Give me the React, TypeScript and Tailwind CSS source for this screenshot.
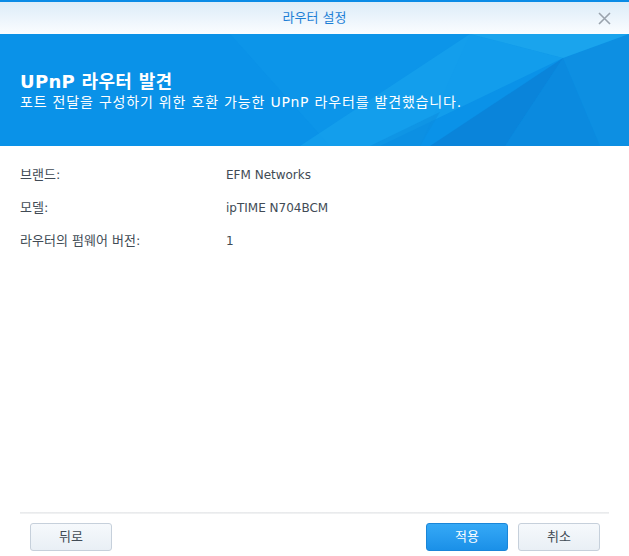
import React from "react";

const ko = { fontFamily: '"DejaVu Sans", "Noto Sans CJK KR", sans-serif' };

function Row({ label, value }: { label: string; value: string }) {
  return (
    <div className="flex h-[33px] items-center text-[#414b55]">
      <div className="w-[206px] text-[13px]">{label}</div>
      <div className="text-[12px]">{value}</div>
    </div>
  );
}

export default function App() {
  return (
    <div className="flex h-[556px] w-[629px] flex-col overflow-hidden bg-white" style={ko}>
      <div className="relative flex h-[34px] shrink-0 items-center justify-center border-t-2 border-[#0a8be6] bg-gradient-to-b from-[#dcecf8] to-[#fbfdff]">
        <span className="text-[13px] text-[#1d7fd6]">라우터 설정</span>
        <svg className="absolute right-[18px] top-[10px]" width="13" height="13" viewBox="0 0 13 13">
          <path d="M1 1L12 12M12 1L1 12" stroke="#9aa3ad" strokeWidth="1.6" />
        </svg>
      </div>
      <div className="relative flex h-[112px] shrink-0 flex-col justify-center bg-[#0a92e8] px-[20px] pt-[2px]">
        <svg className="absolute inset-0" width="629" height="112" viewBox="0 0 629 112" preserveAspectRatio="none">
          <polygon points="230,0 470,0 420,112 330,112" fill="#0d97ea" opacity="0.5" />
          <polygon points="470,0 563,24 380,112 300,112" fill="#1aa6ee" opacity="0.55" />
          <polygon points="563,24 629,0 629,112 600,112" fill="#0e8fe0" opacity="0.7" />
          <polygon points="563,24 470,0 629,0" fill="#25b0f0" opacity="0.6" />
          <polygon points="563,24 430,112 505,112" fill="#0a7fd4" opacity="0.7" />
          <polygon points="563,24 505,112 600,112" fill="#0b86d9" opacity="0.6" />
          <polygon points="440,78 420,112 370,112" fill="#0c8bdd" opacity="0.5" />
        </svg>
        <div className="relative text-[18px] font-bold leading-[22px] tracking-[0.3px] text-white">UPnP 라우터 발견</div>
        <div className="relative text-[14px] leading-[18px] tracking-[0.8px] text-white">포트 전달을 구성하기 위한 호환 가능한 UPnP 라우터를 발견했습니다.</div>
      </div>
      <div className="flex flex-1 flex-col px-[20px] pt-[12px]">
        <Row label="브랜드:" value="EFM Networks" />
        <Row label="모델:" value="ipTIME N704BCM" />
        <Row label="라우터의 펌웨어 버전:" value="1" />
      </div>
      <div className="mx-[20px] h-[2px] shrink-0 bg-gradient-to-b from-[#e6e8ea] to-[#f3f4f5]" />
      <div className="flex h-[42px] shrink-0 items-start justify-between pl-[30px] pr-[29px] pt-[9px]">
        <button className="h-[28px] w-[82px] rounded-[3px] border border-[#c6d0db] bg-gradient-to-b from-[#f6f9fc] to-[#e9eff5] text-[13px] text-[#414b55]">뒤로</button>
        <div className="flex gap-[10px]">
          <button className="h-[28px] w-[82px] rounded-[3px] border border-[#1a86d8] bg-gradient-to-b from-[#35a9f6] to-[#1a90e8] text-[13px] text-white">적용</button>
          <button className="h-[28px] w-[82px] rounded-[3px] border border-[#c6d0db] bg-gradient-to-b from-[#f6f9fc] to-[#e9eff5] text-[13px] text-[#414b55]">취소</button>
        </div>
      </div>
    </div>
  );
}
